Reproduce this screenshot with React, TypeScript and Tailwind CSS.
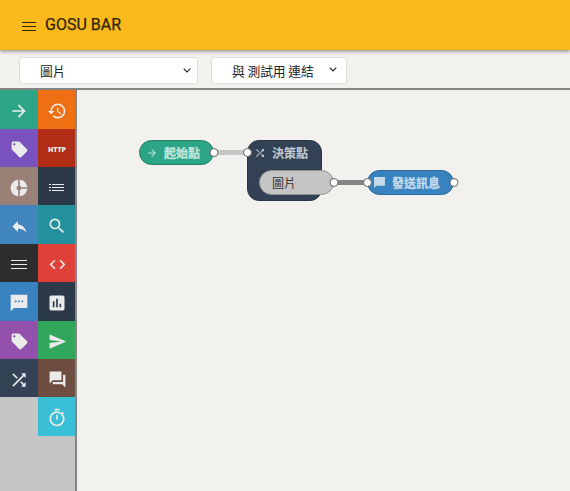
import React from "react";
import {
  MdArrowForward, MdCode, MdDonutSmall, MdHistory, MdLocalOffer,
  MdOutlineTimer, MdPoll, MdReply, MdSearch, MdSend, MdShuffle,
} from "react-icons/md";

function Lines({ className }: { className: string }) {
  return (
    <div className={`flex h-[9px] flex-col justify-between ${className}`}>
      <i className="h-px bg-current" /><i className="h-px bg-current" /><i className="h-px bg-current" />
    </div>
  );
}

function ListLines() {
  return (
    <svg viewBox="0 0 16 9" className="h-[9px] w-4" stroke="currentColor" strokeWidth="1">
      <path d="M0 1.5h2M3 1.5h12M0 4.5h2M3 4.5h12M0 7.5h2M3 7.5h12" />
    </svg>
  );
}

function Chevron({ className }: { className: string }) {
  return (
    <svg viewBox="0 0 8 5" className={`h-[5px] w-2 ${className}`} fill="none" stroke="#222" strokeWidth="1.1">
      <path d="M.7.7 4 4 7.3.7" />
    </svg>
  );
}

function SmsIcon() {
  return (
    <svg viewBox="0 0 24 24" className="size-5" fill="currentColor">
      <path fillRule="evenodd" d="M2 2h20v16H6l-4 4ZM7 9v2h2V9ZM11 9v2h2V9ZM15 9v2h2V9Z" />
    </svg>
  );
}

function MessageIcon() {
  return (
    <svg viewBox="0 0 24 24" className="size-[13px]" fill="currentColor">
      <path d="M2 2h20v16H6l-4 4Z" />
    </svg>
  );
}

function ForumIcon() {
  return (
    <svg viewBox="0 0 24 24" className="size-[19px]" fill="currentColor">
      <path d="M2 2h15v11H6l-4 4ZM19 6h3v16l-4-4H6v-3h13Z" />
    </svg>
  );
}

const left = [
  { color: "h-[39px] bg-[#2ba585]", icon: <MdArrowForward size={20} /> },
  { color: "h-[38px] bg-[#7952bd]", icon: <MdLocalOffer size={19} /> },
  { color: "h-[38px] bg-[#9a8178]", icon: <MdDonutSmall size={20} /> },
  { color: "h-[39px] bg-[#4085be]", icon: <MdReply size={19} /> },
  { color: "h-[38px] bg-[#2d2d2d]", icon: <Lines className="-mt-px w-4" /> },
  { color: "h-[39px] bg-[#3882c0]", icon: <SmsIcon /> },
  { color: "h-[38px] bg-[#9351ad]", icon: <MdLocalOffer size={19} /> },
  { color: "h-[38px] bg-[#334154]", icon: <MdShuffle size={20} /> },
];

const right = [
  { color: "h-[39px] bg-[#ef7012]", icon: <MdHistory size={20} /> },
  { color: "h-[38px] bg-[#b22d15]", icon: <span className="font-['Open_Sans',sans-serif] text-[7px] font-extrabold leading-none">HTTP</span> },
  { color: "h-[38px] bg-[#2c3949]", icon: <ListLines /> },
  { color: "h-[39px] bg-[#23909e]", icon: <MdSearch size={20} className="-mt-px" /> },
  { color: "h-[38px] bg-[#df4037]", icon: <MdCode size={19} /> },
  { color: "h-[39px] bg-[#2c3949]", icon: <MdPoll size={20} /> },
  { color: "h-[38px] bg-[#31a75b]", icon: <MdSend size={19} /> },
  { color: "h-[38px] bg-[#6e4d41]", icon: <ForumIcon /> },
  { color: "h-[39px] bg-[#39bfd6]", icon: <MdOutlineTimer size={20} /> },
];

function ToolColumn({ items, width }: { items: typeof left; width: string }) {
  return (
    <div className={width}>
      {items.map((item, i) => (
        <div key={i} className={`flex items-center justify-center pt-[3px] ${item.color}`}>{item.icon}</div>
      ))}
    </div>
  );
}

function Port({ x, y }: { x: number; y: number }) {
  return <circle cx={x} cy={y} r="4" fill="#fff" stroke="#666" strokeWidth="1" />;
}

export default function App() {
  return (
    <div className="flex h-[491px] w-[570px] flex-col overflow-hidden bg-[#f2f1ed] font-['Noto_Sans_CJK_TC',sans-serif]">
      <header className="z-10 flex h-[50px] shrink-0 items-center bg-[#fbb91b] pl-[22px] text-[#302509] shadow-[0_1px_4px_rgba(0,0,0,0.5)]">
        <Lines className="mt-[3px] w-[14px]" />
        <h1 className="ml-[9px] font-[Roboto,sans-serif] text-base leading-none [-webkit-text-stroke:0.25px]">GOSU BAR</h1>
      </header>
      <div className="flex h-[38px] shrink-0 items-start gap-[13px] pl-[19px] pt-[7px] text-[12.8px] text-[#222]">
        <div className="flex h-[27px] w-[179px] items-center justify-between rounded-[3px] border border-[#dededb] bg-white pl-5 pr-1.5">
          <span>圖片</span><Chevron className="" />
        </div>
        <div className="flex h-[27px] w-[136px] items-center justify-between rounded-[3px] border border-[#dededb] bg-white pl-5 pr-[9px]">
          <span className="tracking-[-0.1px]">與 測試用 連結</span><Chevron className="-mt-0.5" />
        </div>
      </div>
      <div className="flex min-h-0 flex-1 border-t-2 border-[#858585]">
        <aside className="flex w-[77px] shrink-0 border-r-2 border-[#858585] bg-[#c5c5c5] text-[#ebebeb]">
          <ToolColumn items={left} width="w-[38px]" />
          <ToolColumn items={right} width="w-[37px] [&>div]:pl-px" />
        </aside>
        <main className="relative flex-1">
          <svg className="absolute left-0 top-0 h-[401px] w-[493px]">
            <path d="M138 62.5h33" stroke="#c5c5c5" strokeWidth="5" />
            <path d="M258 92.5h33" stroke="#858585" strokeWidth="5" />
          </svg>
          <div className="absolute left-[62px] top-[50px] flex h-[25px] w-[75px] items-center rounded-full border border-[#278068] bg-[#2ba585] pl-[6px] text-xs font-bold text-[#c0e4da]">
            <MdArrowForward size={12} /><span className="ml-1.5 [-webkit-text-stroke:0.3px]">起始點</span>
          </div>
          <div className="absolute left-[170px] top-[50px] flex h-[61px] w-[75px] items-start rounded-[12px] border border-[#293647] bg-[#334154] pl-1.5 text-xs font-bold text-[#c3c9d0]">
            <div className="flex h-[23px] items-center"><MdShuffle size={12} /><span className="ml-[6px] [-webkit-text-stroke:0.1px]">決策點</span></div>
          </div>
          <div className="absolute left-[182px] top-[80px] flex h-[25px] w-[75px] items-center rounded-full border border-[#909090] bg-[#c5c5c5] pl-3 text-xs text-[#333]">圖片</div>
          <div className="absolute left-[290px] top-[80px] flex h-[25px] w-[87px] items-center rounded-full border border-[#2d6796] bg-[#3882c0] pl-[5px] text-xs font-bold text-[#c4dbec]">
            <MessageIcon /><span className="ml-[6px] [-webkit-text-stroke:0.3px]">發送訊息</span>
          </div>
          <svg className="absolute left-0 top-0 h-[401px] w-[493px]">
            <Port x={137} y={62.5} />
            <Port x={170.5} y={62.5} />
            <Port x={257} y={92.5} />
            <Port x={290.5} y={92.5} />
            <Port x={377} y={92.5} />
          </svg>
        </main>
      </div>
    </div>
  );
}
